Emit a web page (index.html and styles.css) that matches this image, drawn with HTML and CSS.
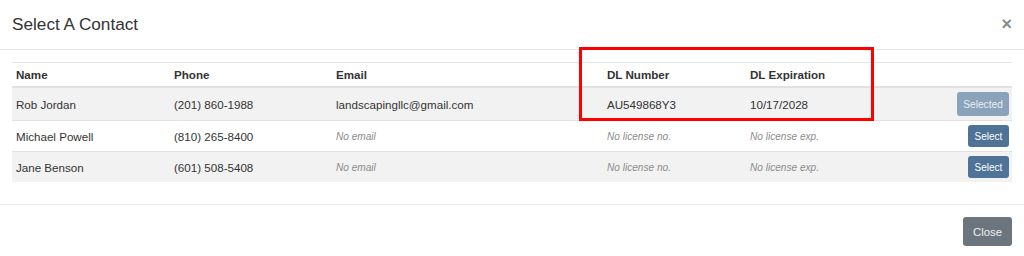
FILE: index.html
```html
<!DOCTYPE html>
<html lang="en">

<head>
  <meta charset="UTF-8" />
  <title>Select A Contact</title>
  <link rel="stylesheet" href="styles.css">
</head>

<body>

  <!-- Contact picker modal -->
  <div class="modal">
    <div class="modal-header">
      <h4 class="modal-title">Select A Contact</h4>
      <button class="close" type="button">&times;</button>
    </div>

    <div class="modal-body">
      <table class="contacts">
        <colgroup>
          <col class="col-name">
          <col class="col-phone">
          <col class="col-email">
          <col class="col-dl">
          <col class="col-exp">
          <col>
        </colgroup>
        <thead>
          <tr>
            <th>Name</th>
            <th>Phone</th>
            <th>Email</th>
            <th>DL Number</th>
            <th>DL Expiration</th>
            <th></th>
          </tr>
        </thead>
        <tbody>
          <tr class="first">
            <td>Rob Jordan</td>
            <td>(201) 860-1988</td>
            <td>landscapingllc@gmail.com</td>
            <td>AU549868Y3</td>
            <td>10/17/2028</td>
            <td class="action"><button class="btn btn-selected">Selected</button></td>
          </tr>
          <tr>
            <td>Michael Powell</td>
            <td>(810) 265-8400</td>
            <td class="empty">No email</td>
            <td class="empty">No license no.</td>
            <td class="empty">No license exp.</td>
            <td class="action"><button class="btn btn-select">Select</button></td>
          </tr>
          <tr>
            <td>Jane Benson</td>
            <td>(601) 508-5408</td>
            <td class="empty">No email</td>
            <td class="empty">No license no.</td>
            <td class="empty">No license exp.</td>
            <td class="action"><button class="btn btn-select">Select</button></td>
          </tr>
        </tbody>
      </table>
    </div>

    <div class="modal-footer">
      <button class="btn btn-close">Close</button>
    </div>

    <!-- highlight drawn over the licence columns -->
    <div class="highlight"></div>
  </div>

</body>

</html>
```

FILE: styles.css
```css
body {
  margin: 0;
  font-family: 'Liberation Sans', Arial, sans-serif;
  color: #333;
  background: #fff;
}

.modal {
  position: relative;
  width: 1024px;
}

.modal-header {
  display: flex;
  align-items: flex-start;
  justify-content: space-between;
  padding: 12px 12px 13px;
  border-bottom: 1px solid #e8e8e8;
}

.modal-title {
  margin: 0;
  font-size: 17.2px;
  line-height: 24px;
  font-weight: normal;
  color: #333;
}

.close {
  border: none;
  background: none;
  padding: 0;
  margin-top: 4px;
  font-family: 'Liberation Sans', Arial, sans-serif;
  font-size: 18px;
  line-height: 16px;
  font-weight: bold;
  color: #8a8a8a;
  cursor: pointer;
}

.modal-body {
  padding: 12px 12px 22px;
}

.contacts {
  width: 1000px;
  table-layout: fixed;
  border-collapse: separate;
  border-spacing: 0;
  font-size: 11.6px;
}

.col-name {
  width: 158px;
}

.col-phone {
  width: 162px;
}

.col-email {
  width: 271px;
}

.col-dl {
  width: 143px;
}

.col-exp {
  width: 143px;
}

.contacts th {
  text-align: left;
  font-weight: bold;
  padding: 4px 3px 4px 4px;
  line-height: 15px;
  border-top: 1px solid #e6e6e6;
  border-bottom: 2px solid #e2e2e2;
}

.contacts td {
  padding: 4px 3px 4px 4px;
  vertical-align: middle;
  border-top: 1px solid #e2e2e2;
  white-space: nowrap;
}

.contacts tr.first td {
  border-top: none;
}

.contacts tbody tr:nth-child(odd) td {
  background-color: #f2f2f2;
}

.contacts td.empty {
  font-style: italic;
  font-size: 10.1px;
  color: #8c8c8c;
}

.contacts td.action {
  text-align: right;
}

.btn {
  font-family: 'Liberation Sans', Arial, sans-serif;
  border: none;
  border-radius: 3px;
  color: #fff;
  cursor: pointer;
  vertical-align: middle;
}

.btn-select {
  background-color: #4e7397;
  font-size: 10px;
  height: 22px;
  width: 41px;
  padding: 0;
}

.btn-selected {
  background-color: #8aa3bb;
  color: #e9eef3;
  font-size: 10.2px;
  height: 24px;
  width: 52px;
  padding: 0;
}

.modal-footer {
  display: flex;
  justify-content: flex-end;
  padding: 12px;
  border-top: 1px solid #e8e8e8;
}

.btn-close {
  background-color: #6c757d;
  color: #eef0f1;
  font-size: 11.4px;
  height: 29px;
  width: 49px;
  padding: 0;
}

.highlight {
  position: absolute;
  left: 579px;
  top: 47px;
  width: 295px;
  height: 74px;
  box-sizing: border-box;
  border: 3px solid #ff0000;
  pointer-events: none;
}
```
